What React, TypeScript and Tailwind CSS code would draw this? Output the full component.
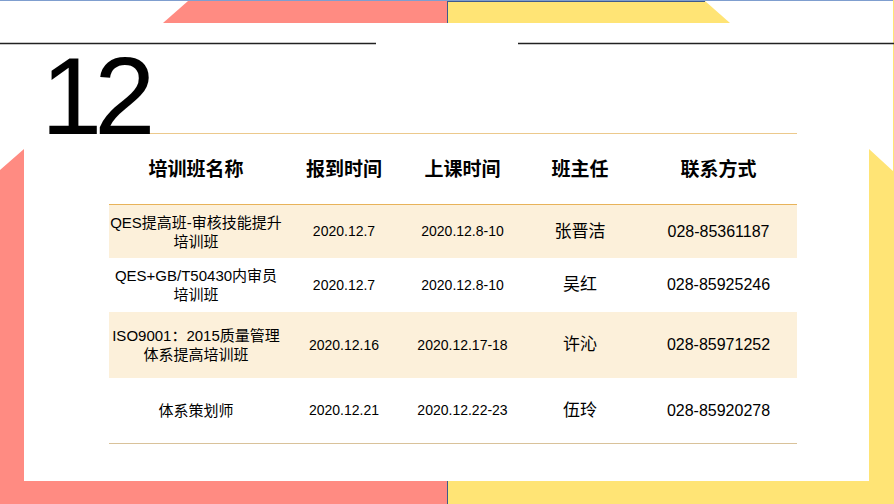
import React from "react";

const rows = [
  { name: ["QES提高班-审核技能提升", "培训班"], reg: "2020.12.7", cls: "2020.12.8-10", head: "张晋洁", tel: "028-85361187", h: "h-[53px]", bg: "bg-[#fcf0da]" },
  { name: ["QES+GB/T50430内审员", "培训班"], reg: "2020.12.7", cls: "2020.12.8-10", head: "吴红", tel: "028-85925246", h: "h-[54px]", bg: "bg-white" },
  { name: ["ISO9001：2015质量管理", "体系提高培训班"], reg: "2020.12.16", cls: "2020.12.17-18", head: "许沁", tel: "028-85971252", h: "h-[66px]", bg: "bg-[#fcf0da]" },
  { name: ["体系策划师"], reg: "2020.12.21", cls: "2020.12.22-23", head: "伍玲", tel: "028-85920278", h: "h-[65px]", bg: "bg-white" },
];

const cols = "grid grid-cols-[174px_122px_115px_120px_157px]";

export default function App() {
  return (
    <div
      className="relative w-[894px] h-[504px] overflow-hidden bg-white text-black"
      style={{ fontFamily: '"Liberation Sans", Arial, "Noto Sans CJK SC", sans-serif' }}
    >
      <svg className="absolute inset-0" width="894" height="504" viewBox="0 0 894 504">
        <polygon points="0,170 24,149 24,481 447,481 447,504 0,504" fill="#ff8b82" />
        <polygon points="869,149 894,172 894,504 448,504 448,481 869,481" fill="#ffe475" />
        <line x1="447.5" y1="481" x2="447.5" y2="504" stroke="#3f5a8c" strokeWidth="1" />
        <polygon points="163,23 188,1 447,1 447,23" fill="#ff8b82" />
        <polygon points="448,1 705,1 730,23 448,23" fill="#ffe475" />
        <line x1="447.5" y1="1" x2="447.5" y2="23" stroke="#3f5a8c" strokeWidth="1" />
        <line x1="448" y1="1.5" x2="705" y2="1.5" stroke="#3f5a8c" strokeWidth="1" />
        <line x1="0" y1="0.5" x2="894" y2="0.5" stroke="#7f9ecf" strokeWidth="1" />
        <line x1="893.5" y1="0" x2="893.5" y2="172" stroke="#ffe475" strokeWidth="1" />
        <line x1="0" y1="43.5" x2="376" y2="43.5" stroke="#222" strokeWidth="1.5" />
        <line x1="518" y1="43.5" x2="894" y2="43.5" stroke="#222" strokeWidth="1.5" />
      </svg>

      <div className="relative flex flex-col pt-[40px]">
        <div className="relative z-10 ml-[41px] h-[112px] text-[110px] leading-[112px] tracking-[-8px]">12</div>
        <div className="ml-[109px] mt-[-19px] w-[688px]">
          <div className={`${cols} h-[72px] pt-[3px] border-t border-[#ecc98c] border-b border-b-[#e8b35a] items-center text-[19px] font-bold`}>
            <div className="text-center">培训班名称</div>
            <div className="text-center">报到时间</div>
            <div className="text-center">上课时间</div>
            <div className="text-center">班主任</div>
            <div className="text-center">联系方式</div>
          </div>
          {rows.map((r, i) => (
            <div key={i} className={`${cols} ${r.h} ${r.bg} items-center`}>
              <div className="text-center text-[15px] leading-[19px]">
                {r.name.map((n, j) => (
                  <div key={j}>{n}</div>
                ))}
              </div>
              <div className="text-center text-[14px]">{r.reg}</div>
              <div className="text-center text-[14px]">{r.cls}</div>
              <div className="text-center text-[17px]">{r.head}</div>
              <div className="text-center text-[16px]">{r.tel}</div>
            </div>
          ))}
          <div className="h-px bg-[#d9c29a]" />
        </div>
      </div>
    </div>
  );
}
